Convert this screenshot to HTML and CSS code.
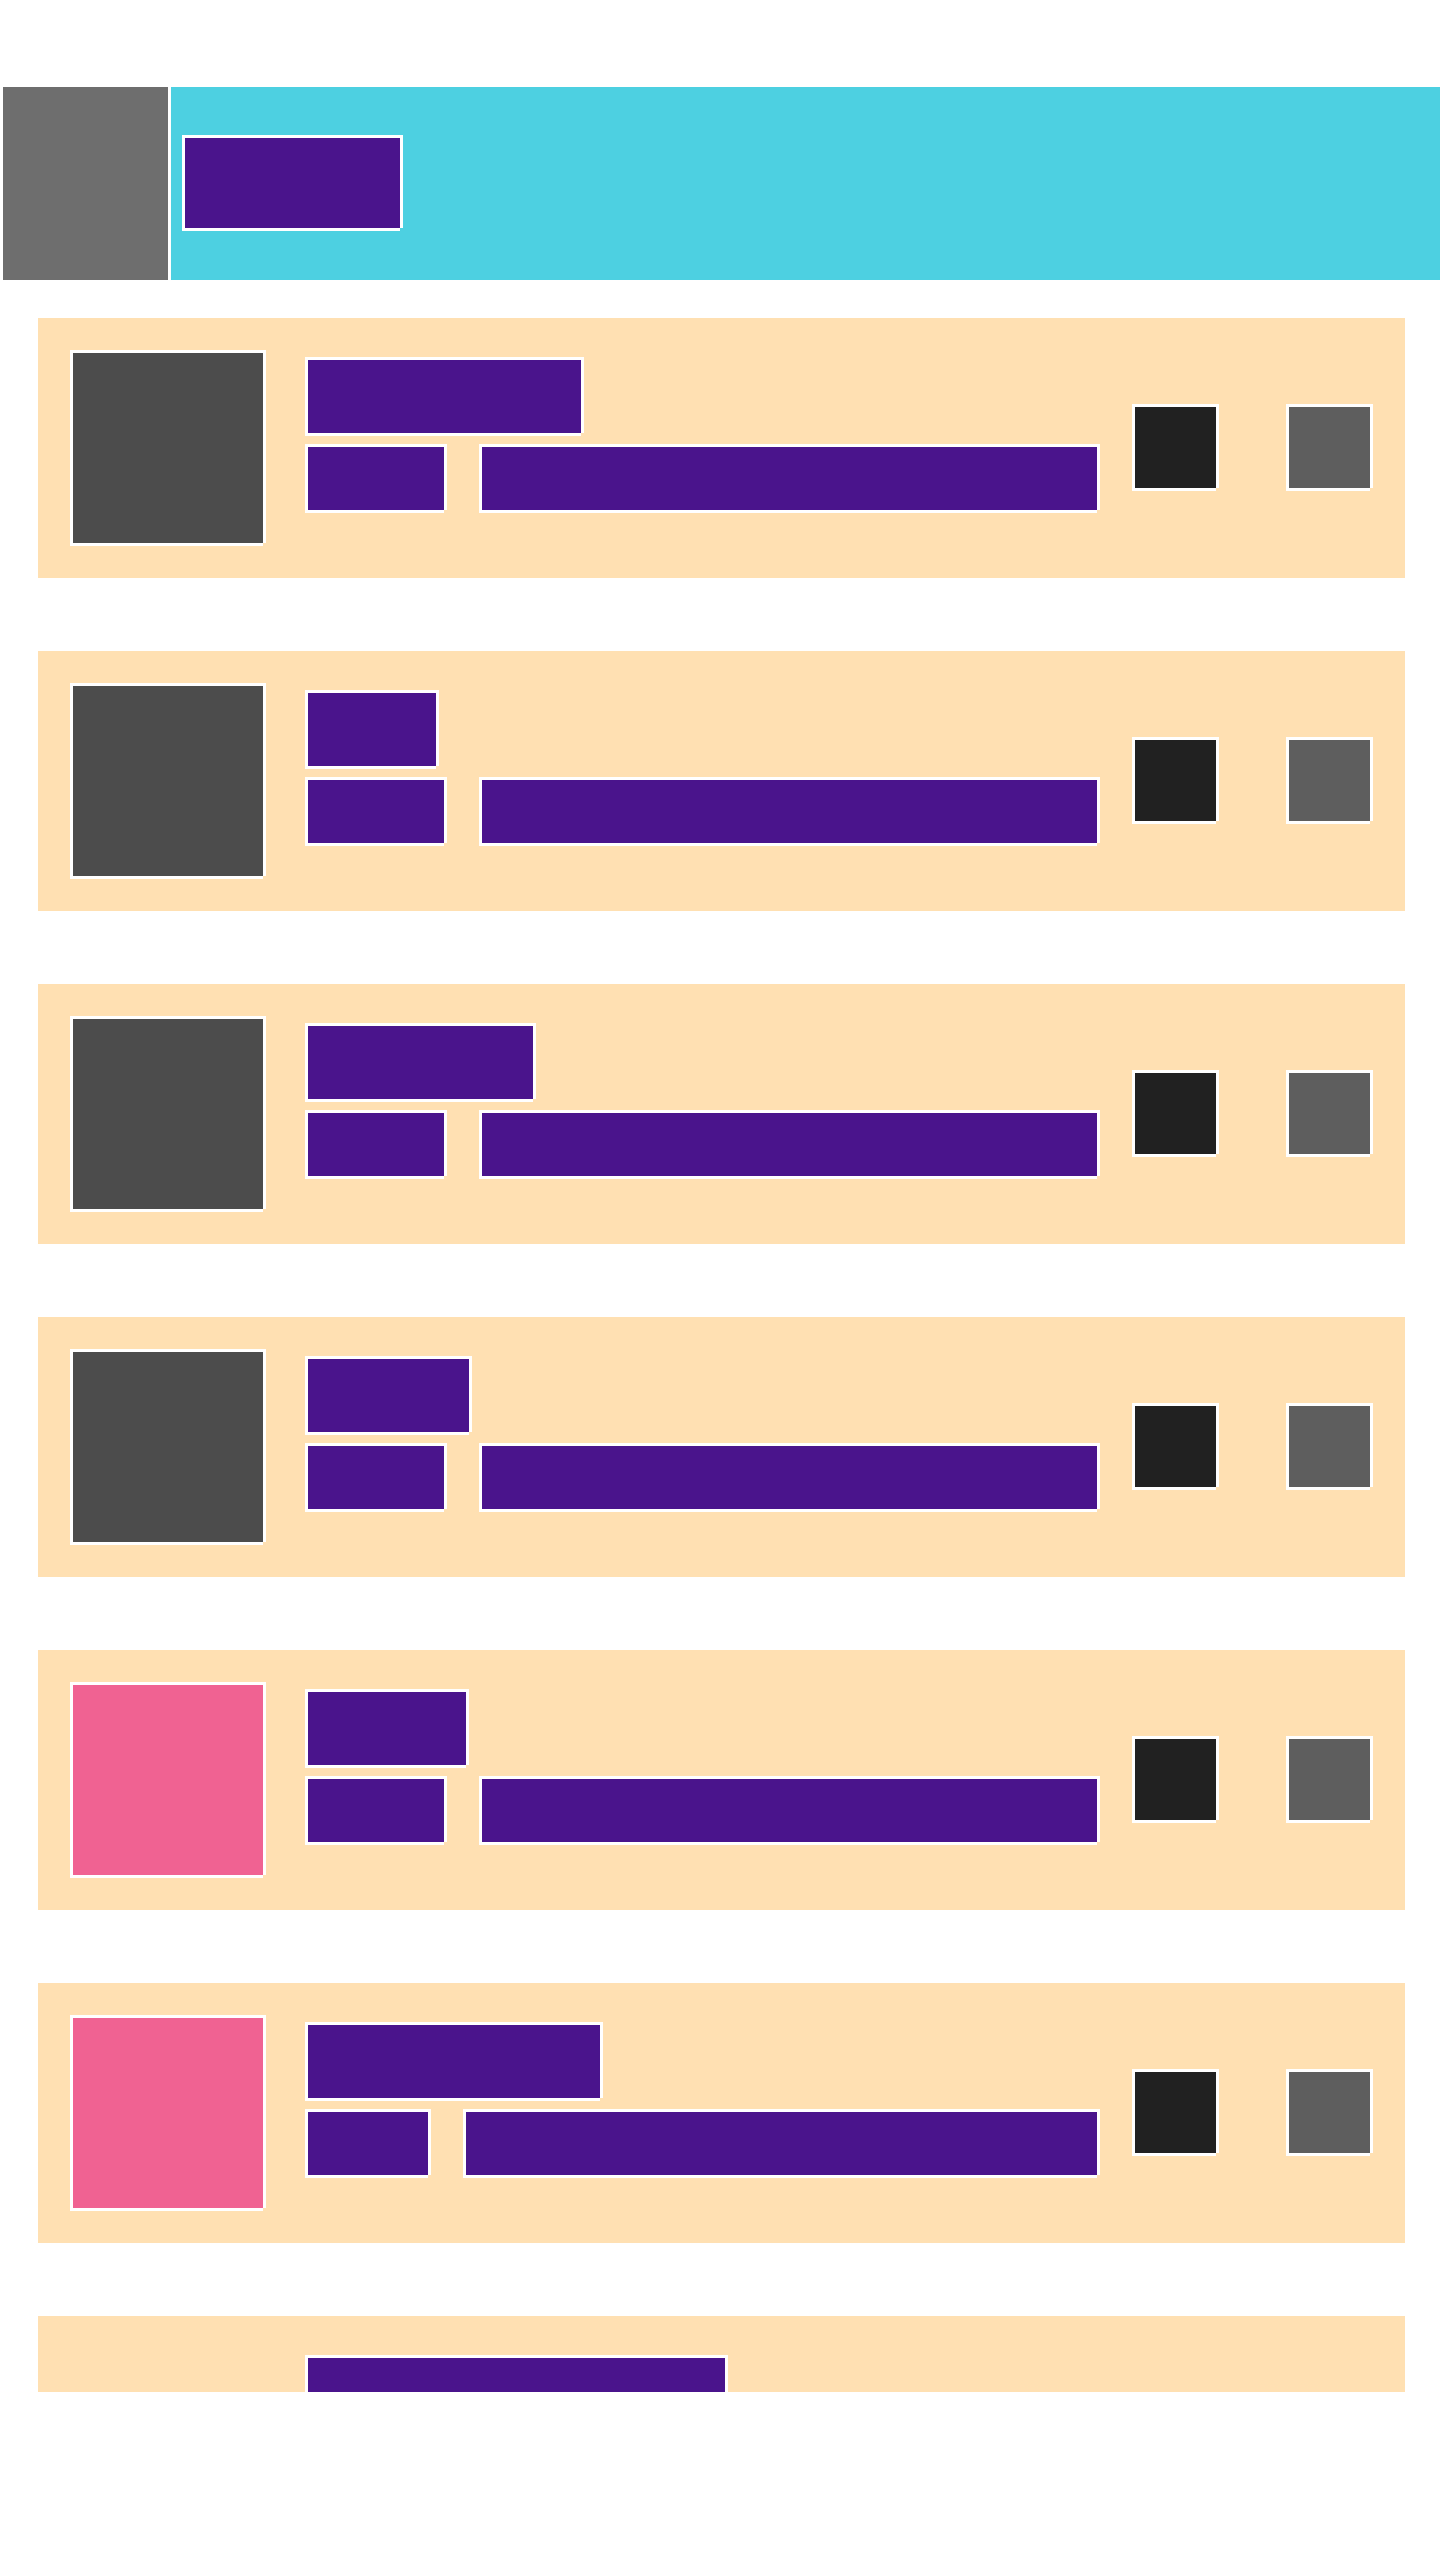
FILE: index.html
```html
<!DOCTYPE html>
<html lang="en">
<head>
<meta charset="utf-8">
<meta name="viewport" content="width=device-width, initial-scale=1">
<title>List</title>
<link rel="stylesheet" href="styles.css">
</head>
<body class="screen">
  <header class="bar">
    <button class="bar-back" type="button" aria-label="Back"></button>
    <div class="bar-main"><div class="block bar-title"></div></div>
  </header>
  <main class="list">
    <article class="card">
      <div class="block avatar"></div>
      <div class="info">
        <div class="block name" style="width:279px"></div>
        <div class="meta"><div class="block tag"></div><div class="block detail"></div></div>
      </div>
      <div class="actions">
        <button class="block action dark" type="button" aria-label="Open"></button>
        <button class="block action" type="button" aria-label="More"></button>
      </div>
    </article>
    <article class="card">
      <div class="block avatar"></div>
      <div class="info">
        <div class="block name" style="width:134px"></div>
        <div class="meta"><div class="block tag"></div><div class="block detail"></div></div>
      </div>
      <div class="actions">
        <button class="block action dark" type="button" aria-label="Open"></button>
        <button class="block action" type="button" aria-label="More"></button>
      </div>
    </article>
    <article class="card">
      <div class="block avatar"></div>
      <div class="info">
        <div class="block name" style="width:231px"></div>
        <div class="meta"><div class="block tag"></div><div class="block detail"></div></div>
      </div>
      <div class="actions">
        <button class="block action dark" type="button" aria-label="Open"></button>
        <button class="block action" type="button" aria-label="More"></button>
      </div>
    </article>
    <article class="card">
      <div class="block avatar"></div>
      <div class="info">
        <div class="block name" style="width:167px"></div>
        <div class="meta"><div class="block tag"></div><div class="block detail"></div></div>
      </div>
      <div class="actions">
        <button class="block action dark" type="button" aria-label="Open"></button>
        <button class="block action" type="button" aria-label="More"></button>
      </div>
    </article>
    <article class="card">
      <div class="block avatar pink"></div>
      <div class="info">
        <div class="block name" style="width:164px"></div>
        <div class="meta"><div class="block tag"></div><div class="block detail"></div></div>
      </div>
      <div class="actions">
        <button class="block action dark" type="button" aria-label="Open"></button>
        <button class="block action" type="button" aria-label="More"></button>
      </div>
    </article>
    <article class="card">
      <div class="block avatar pink"></div>
      <div class="info">
        <div class="block name" style="width:298px"></div>
        <div class="meta"><div class="block tag short"></div><div class="block detail"></div></div>
      </div>
      <div class="actions">
        <button class="block action dark" type="button" aria-label="Open"></button>
        <button class="block action" type="button" aria-label="More"></button>
      </div>
    </article>
    <article class="card">
      <div class="avatar-space"></div>
      <div class="info">
        <div class="block name" style="width:423px"></div>
      </div>
    </article>
  </main>
</body>
</html>
```
FILE: styles.css
```css
* {
  box-sizing: border-box;
}

.screen {
  display: flex;
  flex-direction: column;
  height: 100vh;
  margin: 0;
  padding: 87px 0 168px;
  background: #fff;
  font-family: Roboto, sans-serif;
}

/* White outline, open at the bottom right corner */
.block {
  border: 3px solid #fff;
  background: #4a148c;
  clip-path: polygon(0 0, 100% 0, 100% calc(100% - 3px), calc(100% - 3px) calc(100% - 3px), calc(100% - 3px) 100%, 0 100%);
}

.bar {
  display: flex;
  flex: none;
  gap: 3px;
  padding-left: 3px;
}

.bar-back {
  width: 165px;
  padding: 0;
  border: 0;
  background: #6e6e6e;
}

.bar-main {
  flex: 1;
  padding: 48px 11px 49px;
  background: #4dd0e1;
}

.bar-title {
  width: 221px;
  height: 96px;
}

.list {
  display: flex;
  flex: 1;
  flex-direction: column;
  gap: 73px;
  min-height: 0;
  margin: 38px 35px 0 38px;
  overflow: hidden;
}

.card {
  display: flex;
  flex: none;
  align-items: flex-start;
  min-height: 260px;
  padding: 32px;
  background: #ffe0b2;
}

.avatar,
.avatar-space {
  flex: none;
  width: 196px;
  height: 196px;
}

.avatar {
  background: #4c4c4c;
}

.avatar.pink {
  background: #f06292;
}

.info {
  display: flex;
  flex: 1;
  flex-direction: column;
  gap: 8px;
  min-width: 0;
  padding: 7px 32px 0 39px;
}

.name {
  height: 79px;
}

.meta {
  display: flex;
  gap: 32px;
  height: 69px;
}

.tag {
  flex: none;
  width: 142px;
}

.tag.short {
  width: 126px;
}

.detail {
  flex: 1;
}

.actions {
  display: flex;
  flex: none;
  gap: 67px;
  padding-top: 54px;
}

.action {
  width: 87px;
  height: 87px;
  padding: 0;
  background: #5e5e5e;
}

.action.dark {
  background: #212121;
}
```
